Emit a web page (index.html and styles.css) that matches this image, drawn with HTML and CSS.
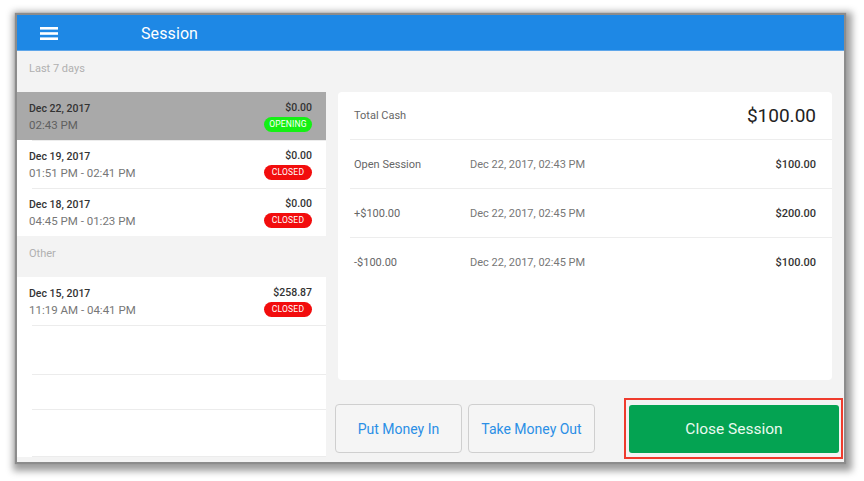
FILE: index.html
```html
<!DOCTYPE html>
<html>
<head>
<meta charset="utf-8">
<link rel="stylesheet" href="styles.css">
</head>
<body>
<div class="frame">
  <div class="app">
    <header class="topbar">
      <svg class="menu" width="18" height="13" viewBox="0 0 18 13"><rect x="0" y="0" width="18" height="2.6" fill="#fff"/><rect x="0" y="5.2" width="18" height="2.6" fill="#fff"/><rect x="0" y="10.4" width="18" height="2.6" fill="#fff"/></svg>
      <span class="title">Session</span>
    </header>
    <div class="main">
      <aside class="sessions">
        <div class="section">Last 7 days</div>
        <div class="row selected">
          <div class="left"><div class="date">Dec 22, 2017</div><div class="time">02:43 PM</div></div>
          <div class="right"><div class="amt">$0.00</div><span class="badge open">OPENING</span></div>
        </div>
        <div class="row">
          <div class="left"><div class="date">Dec 19, 2017</div><div class="time">01:51 PM - 02:41 PM</div></div>
          <div class="right"><div class="amt">$0.00</div><span class="badge closed">CLOSED</span></div>
        </div>
        <div class="row">
          <div class="left"><div class="date">Dec 18, 2017</div><div class="time">04:45 PM - 01:23 PM</div></div>
          <div class="right"><div class="amt">$0.00</div><span class="badge closed">CLOSED</span></div>
        </div>
        <div class="section other">Other</div>
        <div class="row">
          <div class="left"><div class="date">Dec 15, 2017</div><div class="time">11:19 AM - 04:41 PM</div></div>
          <div class="right"><div class="amt">$258.87</div><span class="badge closed">CLOSED</span></div>
        </div>
        <div class="empty e1"></div>
        <div class="empty e2"></div>
        <div class="empty e3"></div>
      </aside>
      <section class="detail">
        <div class="card">
          <div class="crow total"><span class="label">Total Cash</span><span class="big">$100.00</span></div>
          <div class="crow"><span class="label">Open Session</span><span class="when">Dec 22, 2017, 02:43 PM</span><span class="val">$100.00</span></div>
          <div class="crow"><span class="label">+$100.00</span><span class="when">Dec 22, 2017, 02:45 PM</span><span class="val">$200.00</span></div>
          <div class="crow"><span class="label">-$100.00</span><span class="when">Dec 22, 2017, 02:45 PM</span><span class="val">$100.00</span></div>
        </div>
        <div class="actions">
          <button class="btn ghost in">Put Money In</button>
          <button class="btn ghost out">Take Money Out</button>
          <div class="highlight"><button class="btn primary">Close Session</button></div>
        </div>
      </section>
    </div>
  </div>
</div>
</body>
</html>
```
FILE: styles.css
```css
* { box-sizing: border-box; }
html, body { margin: 0; padding: 0; background: #fff; }
body { font-family: Roboto, "Noto Sans", "Liberation Sans", sans-serif; width: 864px; height: 481px; overflow: hidden; }
.frame { padding: 15px 0 0 17px; }
.app {
  width: 827px; height: 447px;
  background: #f3f3f3;
  display: flex; flex-direction: column;
  box-shadow: 0 0 1px 2px #8c8c8c, 2px 3px 7px 6px rgba(0,0,0,0.38);
}
.topbar {
  height: 36px; background: #1e88e5;
  display: flex; align-items: center;
  padding-left: 23px; padding-top: 2px;
  border-bottom: 1px solid #5ea6ea;
}
.menu { display: block; }
.title { color: #fff; font-size: 16px; margin-left: 83px; letter-spacing: 0.1px; }
.main { flex: 1; display: flex; min-height: 0; }
.sessions { width: 309px; display: flex; flex-direction: column; }
.section {
  height: 41px; padding: 11px 0 0 12px;
  font-size: 11px; color: #b0b0b0; background: #f3f3f3;
}
.row {
  height: 48px; background: #fff;
  display: flex; justify-content: space-between; align-items: center;
  padding: 1px 14px 0 12px;
  position: relative;
}
.row + .row::before {
  content: ""; position: absolute; left: 15px; right: 0; top: 0; height: 1px; background: #ececec;
}
.row.selected { background: #a9a9a9; }
.date { font-size: 10.5px; font-weight: 500; color: #333; margin-bottom: 3px; }
.time { font-size: 11.5px; color: #777; }
.selected .time { color: #606060; }
.right { display: flex; flex-direction: column; align-items: flex-end; }
.amt { font-size: 10.5px; font-weight: 500; color: #333; margin-bottom: 3px; }
.badge {
  display: inline-block; width: 48px; height: 15px; line-height: 15px; border-radius: 8px;
  font-size: 8.5px; text-align: center; color: #fff; letter-spacing: 0.2px;
}
.badge.open { background: #14f014; }
.badge.closed { background: #f20d0d; }
.empty { background: #fff; position: relative; border-top: 1px solid #ececec; margin-left: 0; }
.empty::before { content: ""; position: absolute; left: 0; width: 15px; top: -1px; height: 1px; background: #fff; }
.e1 { height: 49px; }
.e2 { height: 35px; }
.e3 { height: 48px; border-bottom: 1px solid #ececec; }
.e3::after { content: ""; position: absolute; left: 0; width: 15px; bottom: -1px; height: 1px; background: #fff; }
.detail { flex: 1; display: flex; flex-direction: column; padding: 41px 0 0 0; }
.card {
  margin: 0 12px; height: 288px; background: #fff; border-radius: 4px;
}
.crow {
  height: 49px; display: flex; align-items: center;
  margin-left: 12px; padding-left: 4px; padding-right: 16px;
  border-bottom: 1px solid #ededed;
  font-size: 11px; color: #666;
}
.crow.total { height: 48px; }
.crow:last-child { border-bottom: none; }
.label { width: 116px; }
.when { flex: 1; color: #777; }
.val { font-weight: 500; color: #333; }
.big { margin-left: auto; font-size: 19px; color: #222; }
.actions {
  display: flex; align-items: center;
  margin-top: 18px; padding-left: 9px; padding-right: 1px;
}
.btn {
  font-family: inherit; cursor: pointer;
  height: 49px; border-radius: 4px; font-size: 14px;
}
.ghost { background: #f5f5f5; border: 1px solid #cfcfcf; color: #2b8fe6; font-weight: 400; }
.in { width: 127px; }
.out { width: 127px; margin-left: 6px; }
.highlight {
  margin-left: auto; border: 2px solid #ef3b2d;
  padding: 5px 2px 4px 3px;
}
.primary {
  display: block; width: 210px; height: 48px; border: none;
  background: #04a352; color: #eafaf0; font-size: 15.5px; border-radius: 3px;
}
```
